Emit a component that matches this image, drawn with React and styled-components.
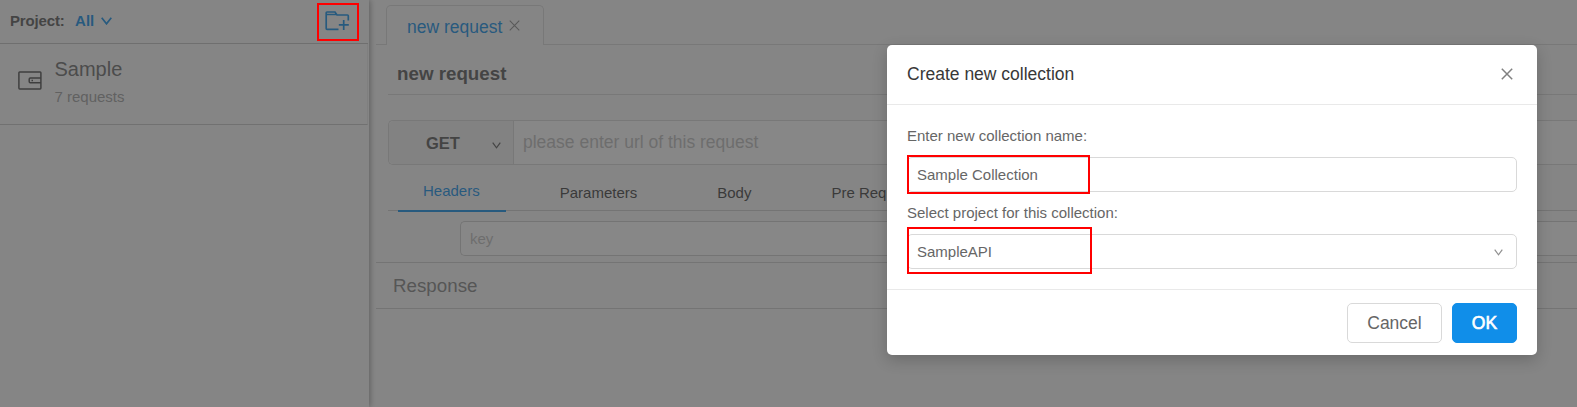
import React from "react";
import styled, { createGlobalStyle } from "styled-components";

const GlobalStyle = createGlobalStyle`
  * { box-sizing: border-box; }
  body {
    margin: 0;
    overflow: hidden;
    background: #fbfbfb;
    color: #595959;
    font: 15px/20px "Liberation Sans", Arial, sans-serif;
  }
`;

const Page = styled.div`
  position: relative;
  display: flex;
  width: 1577px;
  height: 407px;
  overflow: hidden;
`;

const Sidebar = styled.aside`
  position: relative;
  z-index: 1;
  flex: none;
  width: 369px;
  background: #fbfbfb;
  box-shadow: 1px 0 6px rgba(0, 0, 0, 0.4);
`;

const SidebarHeader = styled.div`
  display: flex;
  align-items: center;
  width: 368px;
  height: 44px;
  padding: 0 18px 2px 10px;
  border-bottom: 1px solid #c4c4c4;
  font-weight: bold;
`;

const ProjectLabel = styled.span`
  padding-top: 1px;
  letter-spacing: -0.15px;
`;

const ProjectFilter = styled.span`
  display: flex;
  align-items: center;
  gap: 7px;
  margin-left: 10.4px;
  padding-top: 1px;
  color: #108ee9;
`;

const AddCollection = styled.span`
  display: flex;
  margin-left: auto;
  color: #108ee9;
`;

const CollectionItem = styled.div`
  display: flex;
  width: 368px;
  height: 81px;
  padding: 13px 0 0 18px;
  border-bottom: 1px solid #c8c8c8;
  border-right: 1px solid #ececec;
`;

const CollectionIcon = styled.span`
  display: flex;
  width: 36.5px;
  padding-top: 14px;
  color: #4a4a4a;
`;

const CollectionName = styled.div`
  font-size: 20px;
  line-height: 24px;
  color: #6b6b6b;
`;

const CollectionCount = styled.div`
  margin-top: 6px;
  line-height: 20px;
  color: #a0a0a0;
`;

const Main = styled.main`
  flex: 1;
  min-width: 0;
  padding-left: 7px;
`;

const TabBar = styled.div`
  display: flex;
  align-items: flex-end;
  height: 45px;
  padding-left: 10px;
  border-bottom: 1px solid #d9d9d9;
`;

const RequestTab = styled.div`
  display: flex;
  gap: 7px;
  width: 158px;
  height: 40px;
  margin-bottom: -1px;
  padding: 10px 0 0 20px;
  border: 1px solid #d9d9d9;
  border-bottom: 0;
  border-radius: 5px 5px 0 0;
  background: #fbfbfb;
  color: #108ee9;
  font-size: 17.5px;
  line-height: 22px;
`;

const TabClose = styled.span`
  display: flex;
  padding-top: 4px;
  color: #8c8c8c;
`;

const RequestForm = styled.section`
  padding-left: 12px;
`;

const RequestTitle = styled.h1`
  height: 50px;
  margin: 0;
  padding: 18px 0 0 9px;
  border-bottom: 1px solid #d9d9d9;
  font-size: 18.75px;
  line-height: 22px;
`;

const UrlRow = styled.div`
  display: flex;
  height: 45px;
  margin-top: 25px;
  border: 1px solid #d9d9d9;
  border-right: 0;
  border-radius: 5px 0 0 5px;
  background: #fff;
  font-size: 17.5px;
`;

const MethodSelect = styled.div`
  display: flex;
  align-items: center;
  justify-content: space-between;
  width: 125px;
  padding: 1px 12px 0 37px;
  border-right: 1px solid #d9d9d9;
  border-radius: 5px 0 0 5px;
  background: #f2f2f2;
  font-size: 16.5px;
  font-weight: bold;

  svg { margin-top: 4px; }
`;

const UrlPlaceholder = styled.span`
  padding: 11px 0 0 9px;
  color: #bfbfbf;
`;

const RequestTabs = styled.nav`
  display: flex;
  height: 46px;
  padding: 0 10px;
  border-bottom: 1px solid #d0d0d0;
`;

const RequestTabItem = styled.span`
  flex: none;
  height: 47px;
  margin-right: ${(p) => (p.$active ? "29px" : "0")};
  padding: ${(p) => (p.$active ? "16px 26px 0 25px" : "18px 55px 0 25px")};
  border-bottom: ${(p) => (p.$active ? "2px solid #108ee9" : "0")};
  color: ${(p) => (p.$active ? "#108ee9" : "#404040")};
`;

const HeaderRow = styled.div`
  height: 51px;
  padding: 10px 0 0 72px;
`;

const KeyInput = styled.div`
  height: 35px;
  padding: 7px 9px;
  border: 1px solid #d0d0d0;
  border-right: 0;
  border-radius: 5px 0 0 5px;
  background: #fff;
  color: #bfbfbf;
`;

const ResponseBar = styled.h2`
  height: 47px;
  margin: 0;
  padding: 12px 17px 0;
  border: solid #d0d0d0;
  border-width: 1px 0;
  color: #858585;
  font-size: 18.75px;
  font-weight: normal;
  line-height: 22px;
`;

const Mask = styled.div`
  position: absolute;
  z-index: 2;
  inset: 0;
  background: rgba(55, 55, 55, 0.6);
`;

const Highlight = styled.div`
  position: absolute;
  z-index: 4;
  top: ${(p) => p.$top}px;
  left: ${(p) => p.$left}px;
  width: ${(p) => p.$width}px;
  height: ${(p) => p.$height}px;
  border: 2px solid #f00;
`;

const Modal = styled.div`
  position: absolute;
  z-index: 3;
  top: 45px;
  left: 887px;
  width: 650px;
  height: 310px;
  border-radius: 5px;
  background: #fff;
  box-shadow: 0 5px 15px rgba(0, 0, 0, 0.2);
`;

const ModalHeader = styled.header`
  display: flex;
  justify-content: space-between;
  height: 60px;
  padding: 18px 24px 0 20px;
  border-bottom: 1px solid #e9e9e9;
  color: #383838;
  font-size: 17.5px;
  line-height: 22px;

  svg { margin-top: 5px; color: #808080; }
`;

const ModalBody = styled.div`
  height: 184px;
  padding: 20px 20px 0;
`;

const FieldLabel = styled.div`
  height: 32px;
  color: #666;
  line-height: 22px;
`;

const Field = styled.div`
  position: relative;
  display: flex;
  justify-content: space-between;
  align-items: center;
  height: 35px;
  margin-bottom: 10px;
  padding: 0 13px 0 9px;
  border: 1px solid #d9d9d9;
  border-radius: 5px;
  color: #666;

  svg { margin-top: 2px; color: #909090; }
`;

const ModalFooter = styled.footer`
  display: flex;
  justify-content: flex-end;
  gap: 10px;
  padding: 13px 20px 0;
  border-top: 1px solid #e9e9e9;
`;

const Button = styled.button`
  width: ${(p) => (p.$primary ? 65 : 95)}px;
  height: 40px;
  padding: 0;
  border: 1px solid ${(p) => (p.$primary ? "#108ee9" : "#d9d9d9")};
  border-radius: 5px;
  background: ${(p) => (p.$primary ? "#108ee9" : "#fff")};
  color: ${(p) => (p.$primary ? "#fff" : "#666")};
  font: 17.5px "Liberation Sans", Arial, sans-serif;
  -webkit-text-stroke: ${(p) => (p.$primary ? "0.6px #fff" : "0")};
`;

const Chevron = ({ width, height, stroke = 1.2 }) => (
  <svg width={width} height={height} viewBox={`0 0 ${width} ${height}`} fill="none" stroke="currentColor" strokeWidth={stroke}>
    <path d={`M.7 .7L${width / 2} ${height - 1.2}L${width - 0.7} .7`} />
  </svg>
);

const Cross = ({ size, stroke }) => (
  <svg width={size} height={size} viewBox="0 0 12 12" fill="none" stroke="currentColor" strokeWidth={stroke}>
    <path d="M.8 .8L11.2 11.2M11.2 .8L.8 11.2" />
  </svg>
);

const FolderPlus = () => (
  <svg width="25" height="20" viewBox="0 0 25 20" fill="none" stroke="currentColor" strokeWidth="1.7">
    <path d="M13.5 18.4H2Q1.2 18.4 1.2 17.6V1.8Q1.2 1 2 1H10L12 4H22.5Q23.3 4 23.3 4.8V9.5M2 3.5H12" />
    <path d="M18.7 9V19M13.8 13.9H23.8" />
  </svg>
);

const Wallet = () => (
  <svg width="24" height="19" viewBox="0 0 24 19" fill="none" stroke="currentColor" strokeWidth="1.5">
    <rect x=".9" y=".9" width="22" height="17" rx=".8" />
    <path d="M23 7.1H12.3Q11.2 7.1 11.2 8.2V10.6Q11.2 11.7 12.3 11.7H23M13.5 9.4H15" />
  </svg>
);

const requestTabs = ["Headers", "Parameters", "Body", "Pre Request"];

export default function App() {
  return (
    <Page>
      <GlobalStyle />
      <Sidebar>
        <SidebarHeader>
          <ProjectLabel>Project:</ProjectLabel>
          <ProjectFilter>All <Chevron width={11} height={8} stroke={1.7} /></ProjectFilter>
          <AddCollection><FolderPlus /></AddCollection>
        </SidebarHeader>
        <CollectionItem>
          <CollectionIcon><Wallet /></CollectionIcon>
          <div>
            <CollectionName>Sample</CollectionName>
            <CollectionCount>7 requests</CollectionCount>
          </div>
        </CollectionItem>
      </Sidebar>
      <Main>
        <TabBar>
          <RequestTab>
            new request
            <TabClose><Cross size={11} stroke={1.2} /></TabClose>
          </RequestTab>
        </TabBar>
        <RequestForm>
          <RequestTitle>new request</RequestTitle>
          <UrlRow>
            <MethodSelect>GET <Chevron width={9} height={7} /></MethodSelect>
            <UrlPlaceholder>please enter url of this request</UrlPlaceholder>
          </UrlRow>
          <RequestTabs>
            {requestTabs.map((name, i) => (
              <RequestTabItem key={name} $active={i === 0}>{name}</RequestTabItem>
            ))}
          </RequestTabs>
          <HeaderRow><KeyInput>key</KeyInput></HeaderRow>
        </RequestForm>
        <ResponseBar>Response</ResponseBar>
      </Main>
      <Mask />
      <Highlight $top={3} $left={317} $width={42} $height={38} />
      <Modal>
        <ModalHeader>
          Create new collection
          <Cross size={12} stroke={1.5} />
        </ModalHeader>
        <ModalBody>
          <FieldLabel>Enter new collection name:</FieldLabel>
          <Field>
            Sample Collection
            <Highlight $top={-3} $left={-1} $width={183} $height={39} />
          </Field>
          <FieldLabel>Select project for this collection:</FieldLabel>
          <Field>
            SampleAPI
            <Chevron width={9} height={7} />
            <Highlight $top={-8} $left={-1} $width={185} $height={47} />
          </Field>
        </ModalBody>
        <ModalFooter>
          <Button>Cancel</Button>
          <Button $primary>OK</Button>
        </ModalFooter>
      </Modal>
    </Page>
  );
}
